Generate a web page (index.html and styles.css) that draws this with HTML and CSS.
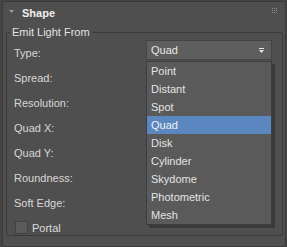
FILE: index.html
```html
<!DOCTYPE html>
<html>
<head>
<meta charset="utf-8">
<link rel="stylesheet" href="styles.css">
</head>
<body>
<div class="rollout">
  <div class="header">
    <svg class="caret" width="5" height="3" viewBox="0 0 5 3"><polygon points="0,0 5,0 2.5,3" fill="#9a9a9a"/></svg>
    <span class="title">Shape</span>
    <svg class="grip" width="6" height="6" viewBox="0 0 6 6">
      <g fill="#8a8a8a">
        <rect x="0" y="0" width="1" height="1"/><rect x="2" y="0" width="1" height="1"/><rect x="4" y="0" width="1" height="1"/>
        <rect x="0" y="2" width="1" height="1"/><rect x="2" y="2" width="1" height="1"/><rect x="4" y="2" width="1" height="1"/>
        <rect x="0" y="4" width="1" height="1"/><rect x="2" y="4" width="1" height="1"/><rect x="4" y="4" width="1" height="1"/>
      </g>
    </svg>
  </div>
  <fieldset class="group">
    <legend class="legend">Emit Light From</legend>
    <div class="row">
      <span class="label">Type:</span>
      <div class="combo">
        <span class="combo-text">Quad</span>
        <svg class="combo-arrow" width="5" height="5" viewBox="0 0 5 5"><rect x="0" y="0" width="5" height="1" fill="#e6e6e6"/><polygon points="0,2 5,2 2.5,5" fill="#e6e6e6"/></svg>
        <ul class="menu">
          <li class="item">Point</li>
          <li class="item">Distant</li>
          <li class="item">Spot</li>
          <li class="item selected">Quad</li>
          <li class="item">Disk</li>
          <li class="item">Cylinder</li>
          <li class="item">Skydome</li>
          <li class="item">Photometric</li>
          <li class="item">Mesh</li>
        </ul>
      </div>
    </div>
    <div class="row"><span class="label">Spread:</span></div>
    <div class="row"><span class="label">Resolution:</span></div>
    <div class="row"><span class="label">Quad X:</span></div>
    <div class="row"><span class="label">Quad Y:</span></div>
    <div class="row"><span class="label">Roundness:</span></div>
    <div class="row"><span class="label">Soft Edge:</span></div>
    <div class="row"><span class="check"></span><span class="label check-label">Portal</span></div>
  </fieldset>
</div>
</body>
</html>
```

FILE: styles.css
```css
html, body {
  margin: 0;
  padding: 0;
  background: #444444;
  width: 287px;
  height: 247px;
  overflow: hidden;
  font-family: "Liberation Sans", Arial, sans-serif;
  font-size: 11px;
  color: #dcdcdc;
}
.rollout {
  box-sizing: border-box;
  margin: 1px 0 0 2px;
  width: 284px;
  height: 246px;
  background: #4f4f4f;
  border: 1px solid #3a3a3a;
  border-radius: 3px;
  display: flex;
  flex-direction: column;
}
.header {
  height: 23px;
  display: flex;
  align-items: center;
  padding-left: 6px;
  padding-right: 7px;
}
.caret {
  display: block;
  margin-top: -5px;
}
.title {
  margin-left: 8px;
  font-weight: bold;
  font-size: 11px;
  color: #f0f0f0;
  flex: 1;
  margin-top: -2px;
}
.grip {
  display: block;
  margin-top: -5px;
}
.group {
  margin: 0 2px 0 3px;
  padding: 1px 0 0 7px;
  border: 1px solid #3a3a3a;
  border-radius: 2px;
  height: 211px;
  box-sizing: border-box;
  min-width: 0;
}
.legend {
  padding: 0 3px 0 2px;
  margin-left: -4px;
  line-height: 14px;
  color: #e2e2e2;
}
.row {
  height: 25px;
  display: flex;
  align-items: center;
  position: relative;
}
.label {
  color: #d8d8d8;
}
.combo {
  position: absolute;
  left: 132px;
  top: 0;
  width: 126px;
  height: 20px;
  box-sizing: border-box;
  background: #5e5e5e;
  border: 1px solid #444;
  display: flex;
  align-items: center;
  padding-left: 4px;
  z-index: 2;
}
.combo-text {
  flex: 1;
  color: #e6e6e6;
}
.combo-arrow {
  display: block;
  margin-right: 7px;
}
.menu {
  position: absolute;
  left: -1px;
  top: 20px;
  width: 126px;
  margin: 0;
  padding: 0;
  list-style: none;
  background: #5a5a5a;
  border: 1px solid #3d3d3d;
  box-sizing: border-box;
  box-shadow: 3px 3px 0 #3a3a3a;
}
.item {
  height: 18px;
  line-height: 18px;
  padding-left: 4px;
  color: #e4e4e4;
}
.item.selected {
  background: #5b87c1;
  color: #f2f2f2;
}
.check {
  width: 13px;
  height: 13px;
  box-sizing: border-box;
  background: #5a5a5a;
  border: 1px solid #424242;
  margin-left: 1px;
  margin-right: 4px;
}
.check-label {
  color: #dcdcdc;
}
```
